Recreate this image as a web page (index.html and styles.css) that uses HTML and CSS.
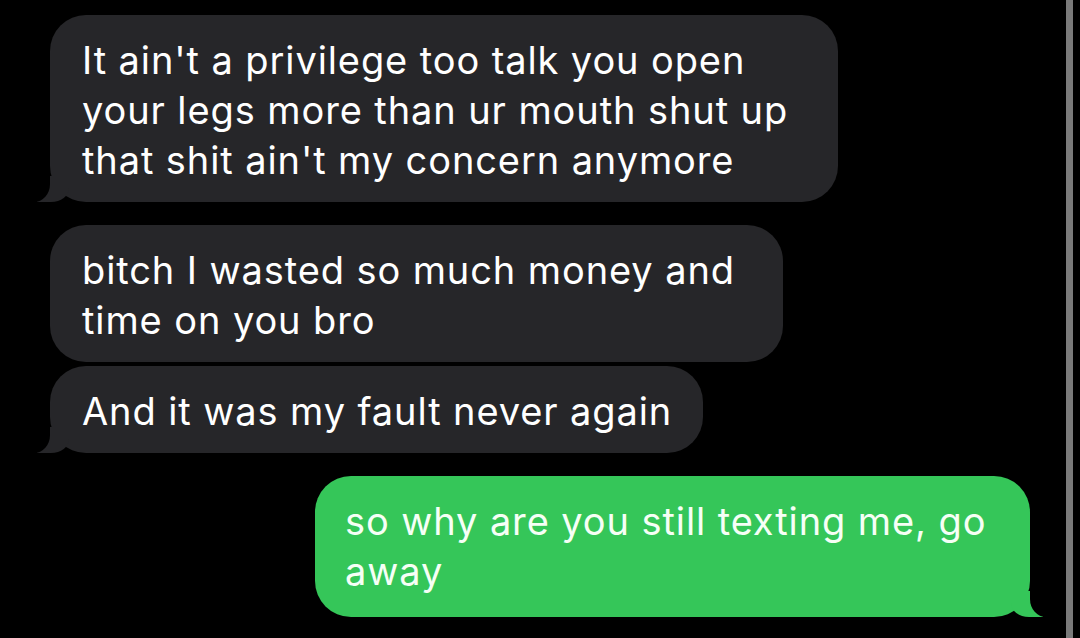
FILE: index.html
```html
<!DOCTYPE html>
<html lang="en">
<head>
<meta charset="UTF-8">
<meta name="viewport" content="width=device-width, initial-scale=1.0">
<title>Messages</title>
<link rel="stylesheet" href="styles.css">
</head>
<body>

<div class="screen">
  <div class="chat">
    <div class="msg them tail w1">
      It ain't a privilege too talk you open<br>
      your legs more than ur mouth shut up<br>
      that shit ain't my concern anymore
    </div>
    <div class="msg them w2">
      bitch I wasted so much money and<br>
      time on you bro
    </div>
    <div class="msg them tail w3 close">
      And it was my fault never again
    </div>
    <div class="msg me tail w4">
      so why are you still texting me, go<br>
      away
    </div>
  </div>
  <div class="scrollbar"></div>
</div>

</body>
</html>
```

FILE: styles.css
```css
body {
  margin: 0;
  padding: 0;
  background-color: #000;
  font-family: Inter, "Liberation Sans", sans-serif;
}

.screen {
  display: flex;
  height: 638px;
  overflow: hidden;
}

.chat {
  flex: 1;
  display: flex;
  flex-direction: column;
  gap: 23px;
  padding: 15px 36px 0 50px;
}

.scrollbar {
  width: 7px;
  margin-right: 7px;
  background-color: #7a7a7a;
}

.msg {
  position: relative;
  box-sizing: border-box;
  padding: 20px 32px 17px 32px;
  border-radius: 36px;
  font-size: 38px;
  line-height: 50px;
  letter-spacing: 0.9px;
  white-space: nowrap;
  color: #fff;
}

.them {
  align-self: flex-start;
  background-color: #262629;
}

.me {
  align-self: flex-end;
  padding-bottom: 21px;
  background-color: #35c659;
  color: #f6fff6;
}

.close {
  margin-top: -19px;
}

.w1 { width: 788px; }
.w2 { width: 733px; }
.w3 { width: 653px; }
.w4 { width: 715px; padding-left: 30px; }

/* bubble tails */
.tail::before,
.tail::after {
  content: "";
  position: absolute;
  bottom: 0;
}

.them.tail::before {
  left: -13px;
  width: 32px;
  height: 26px;
  background-color: #262629;
  border-bottom-right-radius: 18px 14px;
}

.them.tail::after {
  left: -30px;
  width: 30px;
  height: 28px;
  background-color: #000;
  border-bottom-right-radius: 16px 18px;
}

.me.tail::before {
  right: -13px;
  width: 32px;
  height: 26px;
  background-color: #35c659;
  border-bottom-left-radius: 18px 14px;
}

.me.tail::after {
  right: -30px;
  width: 30px;
  height: 28px;
  background-color: #000;
  border-bottom-left-radius: 16px 18px;
}
```
